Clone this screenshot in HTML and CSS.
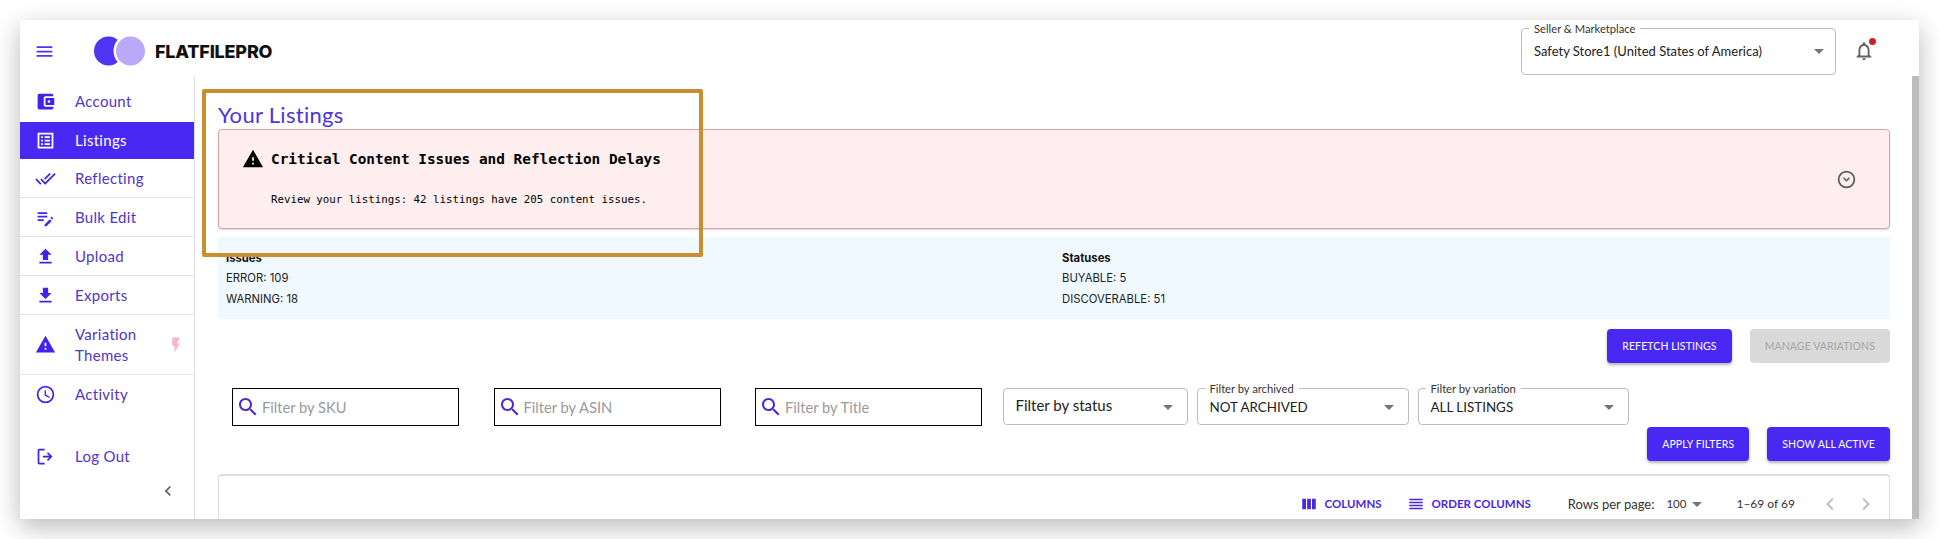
FILE: index.html
```html
<!DOCTYPE html>
<html lang="en">
<head>
<meta charset="utf-8">
<title>Your Listings</title>
<link rel="stylesheet" href="styles.css">
</head>
<body>
<div class="window">
  <header class="topbar">
    <button class="burger" aria-label="Menu"><svg viewBox="0 0 24 24" width="21" height="21"><path d="M3 18h18v-2H3zm0-5h18v-2H3zm0-7v2h18V6z"/></svg></button>
    <div class="logo">
      <svg viewBox="0 0 52 30" width="52" height="30"><circle cx="14.500" cy="15" r="14.500" fill="#4f35f3"/><circle cx="36.500" cy="15" r="17" fill="#fff"/><circle cx="36.500" cy="15" r="14.500" fill="#b9a9f8"/></svg>
      <span>FLATFILEPRO</span>
    </div>
    <div class="topright">
      <div class="select seller">
        <span class="legend">Seller &amp; Marketplace</span>
        <span class="value">Safety Store1 (United States of America)</span>
        <svg class="caret" viewBox="0 0 10 5" width="10" height="5"><path d="M0 0h10L5 5z"/></svg>
      </div>
      <div class="bell">
        <svg viewBox="0 0 24 24" width="22" height="22"><path fill="#616161" d="M12 22c1.100 0 2-.9 2-2h-4c0 1.100.9 2 2 2zm6-6v-5c0-3.070-1.630-5.640-4.500-6.320V4c0-.83-.67-1.500-1.500-1.500s-1.500.67-1.500 1.500v.68C7.640 5.360 6 7.920 6 11v5l-2 2v1h16v-1l-2-2zm-2 1H8v-6c0-2.480 1.510-4.500 4-4.500s4 2.020 4 4.500v6z"/></svg>
        <i class="dot"></i>
      </div>
    </div>
  </header>
  <div class="body">
    <nav class="sidebar">
      <a class="item first"><svg viewBox="0 0 24 24"><path d="M21 18v1c0 1.100-.9 2-2 2H5c-1.110 0-2-.9-2-2V5c0-1.100.89-2 2-2h14c1.100 0 2 .9 2 2v1h-9c-1.110 0-2 .9-2 2v8c0 1.100.89 2 2 2h9zm-9-2h10V8H12v8zm4-2.500c-.83 0-1.500-.67-1.500-1.500s.67-1.500 1.500-1.500 1.500.67 1.500 1.500-.67 1.500-1.500 1.500z"/></svg><span>Account</span></a>
      <a class="item active"><svg viewBox="0 0 24 24"><path d="M3 3v18h18V3H3zm16 16H5V5h14v14zM7 7h2v2H7zm4 0h6v2h-6zm-4 4h2v2H7zm4 0h6v2h-6zm-4 4h2v2H7zm4 0h6v2h-6z"/></svg><span>Listings</span></a>
      <a class="item line"><svg viewBox="0 0 24 24"><path d="M18 7l-1.410-1.410-6.340 6.340 1.410 1.410L18 7zm4.240-1.410L11.660 16.170 7.480 12l-1.410 1.410L11.660 19l12-12-1.420-1.410zM.41 13.410L6 19l1.410-1.410L1.830 12 .41 13.410z"/></svg><span>Reflecting</span></a>
      <a class="item line"><svg viewBox="0 0 24 24"><path d="M3 10h11v2H3zm0-4h11v2H3zm0 8h7v2H3zm17.600-1.300l-1.300-1.300c-.2-.2-.5-.2-.7 0l-1 1 2 2 1-1c.2-.2.2-.5 0-.7zM11 19.900V22h2.100l5.900-6-2-2z"/></svg><span>Bulk Edit</span></a>
      <a class="item line"><svg viewBox="0 0 24 24"><path d="M5 20h14v-2H5v2zM12 3l-7 7h4v6h6v-6h4l-7-7z"/></svg><span>Upload</span></a>
      <a class="item line"><svg viewBox="0 0 24 24"><path d="M19 9h-4V3H9v6H5l7 7 7-7zM5 18v2h14v-2H5z"/></svg><span>Exports</span></a>
      <a class="item line tall"><svg viewBox="0 0 24 24"><path d="M1 21h22L12 2 1 21zm12-3h-2v-2h2v2zm0-4h-2v-4h2v4z"/></svg><span>Variation<br>Themes</span><svg class="bolt" viewBox="0 0 24 24"><path d="M7 2v11h3v9l7-12h-4l4-8z"/></svg></a>
      <a class="item activity"><svg viewBox="0 0 24 24"><path d="M12 2a10 10 0 1 0 0 20 10 10 0 0 0 0-20zm0 18a8 8 0 1 1 0-16 8 8 0 0 1 0 16zm.5-13H11v6l5.200 3.100.8-1.300-4.500-2.700z"/></svg><span>Activity</span></a>
      <a class="item logout"><svg viewBox="0 0 24 24"><path d="M15 7l-1.400 1.400 2.600 2.600H9v2h7.200l-2.600 2.600L15 17l5-5zM5 5h6V3H5a2 2 0 0 0-2 2v14c0 1.100.9 2 2 2h6v-2H5z"/></svg><span>Log Out</span></a>
      <div class="collapse"><svg viewBox="0 0 24 24" width="20" height="20"><path d="M15.410 7.410L14 6l-6 6 6 6 1.410-1.410L10.830 12z"/></svg></div>
    </nav>
    <main class="main">
      <h1>Your Listings</h1>
      <section class="alert">
        <div class="alert-text">
          <h2><svg viewBox="0 0 24 24" width="22" height="22"><path d="M1 21h22L12 2 1 21zm12-3h-2v-2h2v2zm0-4h-2v-4h2v4z"/></svg>Critical Content Issues and Reflection Delays</h2>
          <p>Review your listings: 42 listings have 205 content issues.</p>
        </div>
        <svg class="expand" viewBox="0 0 24 24" width="21" height="21"><path d="M12 2a10 10 0 1 0 0 20 10 10 0 0 0 0-20zm0 18a8 8 0 1 1 0-16 8 8 0 0 1 0 16zm-4-9.400L12 14.600l4-4-1.200-1.200-2.800 2.800-2.800-2.800z"/></svg>
      </section>
      <section class="stats">
        <div><b>Issues</b><p>ERROR: 109</p><p>WARNING: 18</p></div>
        <div><b>Statuses</b><p>BUYABLE: 5</p><p>DISCOVERABLE: 51</p></div>
      </section>
      <div class="actions">
        <button class="btn">REFETCH LISTINGS</button>
        <button class="btn disabled">MANAGE VARIATIONS</button>
      </div>
      <div class="filters">
        <div class="search"><svg viewBox="0 0 24 24" width="24" height="24"><path d="M15.500 14h-.79l-.28-.27C15.410 12.590 16 11.110 16 9.500 16 5.910 13.090 3 9.500 3S3 5.910 3 9.500 5.910 16 9.500 16c1.610 0 3.090-.59 4.230-1.570l.27.28v.79l5 4.990L20.490 19l-4.990-5zm-6 0C7.010 14 5 11.990 5 9.500S7.010 5 9.500 5 14 7.010 14 9.500 11.990 14 9.500 14z"/></svg><span>Filter by SKU</span></div>
        <div class="search"><svg viewBox="0 0 24 24" width="24" height="24"><path d="M15.500 14h-.79l-.28-.27C15.410 12.590 16 11.110 16 9.500 16 5.910 13.090 3 9.500 3S3 5.910 3 9.500 5.910 16 9.500 16c1.610 0 3.090-.59 4.230-1.570l.27.28v.79l5 4.990L20.490 19l-4.990-5zm-6 0C7.010 14 5 11.990 5 9.500S7.010 5 9.500 5 14 7.010 14 9.500 11.990 14 9.500 14z"/></svg><span>Filter by ASIN</span></div>
        <div class="search"><svg viewBox="0 0 24 24" width="24" height="24"><path d="M15.500 14h-.79l-.28-.27C15.410 12.590 16 11.110 16 9.500 16 5.910 13.090 3 9.500 3S3 5.910 3 9.500 5.910 16 9.500 16c1.610 0 3.090-.59 4.230-1.570l.27.28v.79l5 4.990L20.490 19l-4.990-5zm-6 0C7.010 14 5 11.990 5 9.500S7.010 5 9.500 5 14 7.010 14 9.500 11.990 14 9.500 14z"/></svg><span>Filter by Title</span></div>
        <div class="select status"><span class="value">Filter by status</span><svg class="caret" viewBox="0 0 10 5" width="10" height="5"><path d="M0 0h10L5 5z"/></svg></div>
        <div class="select archived"><span class="legend">Filter by archived</span><span class="value">NOT ARCHIVED</span><svg class="caret" viewBox="0 0 10 5" width="10" height="5"><path d="M0 0h10L5 5z"/></svg></div>
        <div class="select variation"><span class="legend">Filter by variation</span><span class="value">ALL LISTINGS</span><svg class="caret" viewBox="0 0 10 5" width="10" height="5"><path d="M0 0h10L5 5z"/></svg></div>
      </div>
      <div class="actions apply">
        <button class="btn">APPLY FILTERS</button>
        <button class="btn">SHOW ALL ACTIVE</button>
      </div>
      <section class="table">
        <a class="tool"><svg viewBox="0 0 24 24" width="18" height="18"><path d="M3 5h5v14H3zm6.500 0h5v14h-5zM16 5h5v14h-5z"/></svg>COLUMNS</a>
        <a class="tool order"><svg viewBox="0 0 24 24" width="18" height="18"><path d="M3 15h18v-2H3v2zm0 4h18v-2H3v2zm0-8h18V9H3v2zm0-6v2h18V5H3z"/></svg>ORDER COLUMNS</a>
        <span class="rows">Rows per page:</span>
        <span class="count">100<svg viewBox="0 0 10 5" width="10" height="5"><path d="M0 0h10L5 5z"/></svg></span>
        <span class="range">1–69 of 69</span>
        <svg class="pager first-pager" viewBox="0 0 24 24" width="24" height="24"><path d="M15.410 7.410L14 6l-6 6 6 6 1.410-1.410L10.830 12z"/></svg>
        <svg class="pager" viewBox="0 0 24 24" width="24" height="24"><path d="M10 6L8.590 7.410 13.170 12l-4.580 4.590L10 18l6-6z"/></svg>
      </section>
      <div class="highlight"></div>
    </main>
    <div class="scrollbar"></div>
  </div>
</div>
</body>
</html>
```
FILE: styles.css
```css
* { box-sizing: border-box; }
html, body { margin: 0; height: 100%; background: #fff; overflow: hidden; }
body { padding: 20px; font-family: "Lato", "Liberation Sans", sans-serif; }
.window { width: 1899px; height: 499px; background: #fff; display: flex; flex-direction: column; overflow: hidden; box-shadow: 0 8px 24px rgba(0,0,0,.28); position: relative; }

.topbar { height: 56px; flex: none; display: flex; align-items: center; padding: 6px 0 0 14px; position: relative; }
.burger { width: 21px; height: 21px; border: 0; padding: 0; background: none; fill: #4f35f3; }
.burger svg { display: block; }
.logo { display: flex; align-items: center; margin-left: 39px; gap: 9px; font-family: "Inter", sans-serif; font-size: 18px; font-weight: 800; color: #111; letter-spacing: -.2px; }
.logo svg { display: block; }
.topright { margin-left: auto; display: flex; align-items: center; }
.bell { position: relative; width: 22px; height: 22px; margin: 0 44px 0 17px; }
.dot { position: absolute; top: -2px; right: -1px; width: 7px; height: 7px; border-radius: 50%; background: #d01f2e; }

.select { position: relative; border: 1px solid #bdbdbd; border-radius: 4px; background: #fff; display: flex; align-items: center; color: #212121; font-size: 13.400px; padding-left: 12px; }
.select .caret { position: absolute; right: 14px; top: 50%; margin-top: -2px; fill: #757575; }
.legend { position: absolute; left: 7px; top: -7px; font-size: 11.200px; line-height: 13px; padding: 0 5px; background: #fff; color: #333; white-space: nowrap; }
.seller { width: 315px; height: 47px; font-size: 13px; }
.seller .caret { right: 11px; }

.body { flex: 1; display: flex; min-height: 0; }
.sidebar { width: 175px; flex: none; border-right: 1px solid #e0e0e0; position: relative; padding-top: 6px; }
.item { display: flex; align-items: center; height: 39px; padding-left: 15px; color: #4f35c9; font-size: 15px; line-height: 21px; letter-spacing: .3px; gap: 19px; position: relative; }
.item svg { width: 21px; height: 21px; fill: #4322ee; flex: none; }
.first { height: 40px; padding-bottom: 2px; }
.active { height: 37px; background: #4a28f4; color: #fff; }
.active svg { fill: #fff; }
.line { border-bottom: 1px solid #e4e4e4; }
.item.tall { height: 60px; }
.item .bolt { position: absolute; right: 9px; top: 50%; margin-top: -9px; width: 18px; height: 18px; fill: #f6b5c6; }
.activity { height: 38px; }
.logout { margin-top: 24px; }
.collapse { position: absolute; left: 138px; bottom: 18px; height: 20px; fill: #616161; }

.main { flex: 1; min-width: 0; padding: 11px 22px 0 23px; position: relative; }
h1 { margin: 0; font-size: 22px; line-height: 36px; height: 42px; padding-top: 10px; font-weight: 400; color: #4f35d9; letter-spacing: .3px; }
.alert { height: 100px; border: 1px solid #d9a5a5; border-radius: 4px; background: #feeeef; display: flex; align-items: center; justify-content: space-between; padding: 0 32px 0 23px; box-shadow: 0 1px 2px rgba(0,0,0,.15); font-family: "DejaVu Sans Mono", monospace; color: #000; }
.alert-text { margin-top: -5px; }
.alert h2 { margin: 0; font-size: 14.400px; font-weight: 700; display: flex; align-items: center; gap: 7px; height: 24px; }
.alert p { margin: 22px 0 0 29px; font-size: 10.780px; line-height: 14px; }
.expand { fill: #5c5c5c; }
.stats { margin-top: 8px; height: 82px; background: #f0f9ff; display: grid; grid-template-columns: 836px 1fr; padding: 11px 8px 0; font-family: "Inter", sans-serif; font-size: 11.300px; color: #222; line-height: 21px; }
.stats b { display: block; font-weight: 700; color: #111; line-height: 20px; }
.stats p { margin: 0; }
.actions { display: flex; justify-content: flex-end; gap: 18px; margin-top: 10px; }
.btn { height: 34px; border: 0; border-radius: 4px; background: #4a28f4; color: #fff; font: 400 10.500px/1 "Lato", sans-serif; padding: 0 15px; box-shadow: 0 2px 3px rgba(0,0,0,.3); letter-spacing: .1px; }
.disabled { background: #d9d9d9; color: #a5a5a5; box-shadow: none; }
.filters { display: flex; margin-top: 25px; padding-left: 14px; align-items: flex-start; }
.search { width: 227px; height: 38px; margin-right: 34.500px; border: 1.500px solid #000; display: flex; align-items: center; padding-left: 3px; gap: 2px; color: #9a9a9a; font-size: 14.700px; fill: #4a28d8; }
.status { width: 185px; height: 37px; margin-left: -14px; margin-right: 9px; padding-bottom: 3px; font-size: 15px; }
.archived { width: 212px; height: 37px; margin-right: 9px; }
.variation { width: 211px; height: 37px; }
.apply { margin-top: 1px; }
.table { margin-top: 13px; height: 60px; border: 1px solid #ddd; border-top-width: 2px; border-radius: 4px 4px 0 0; border-bottom: 0; display: flex; align-items: flex-start; justify-content: flex-end; padding: 16px 11px 0 0; font-size: 13px; line-height: 24px; color: #333; }
.tool { display: flex; align-items: center; gap: 7px; color: #4a28e0; font-weight: 700; font-size: 11.500px; fill: #4a28e0; }
.order { margin-left: 25px; }
.rows { margin-left: 37px; }
.count { margin-left: 12px; display: flex; align-items: center; gap: 6px; fill: #757575; font-size: 11.500px; }
.range { margin-left: 34px; font-size: 12px; }
.pager { fill: #bdbdbd; margin-left: 12px; }
.first-pager { margin-left: 23px; }
.highlight { position: absolute; left: 7px; top: 13px; width: 501px; height: 168px; border: 4px solid #c98f2e; border-radius: 2px; pointer-events: none; }
.scrollbar { width: 7px; flex: none; background: #bdbdbd; }
```
